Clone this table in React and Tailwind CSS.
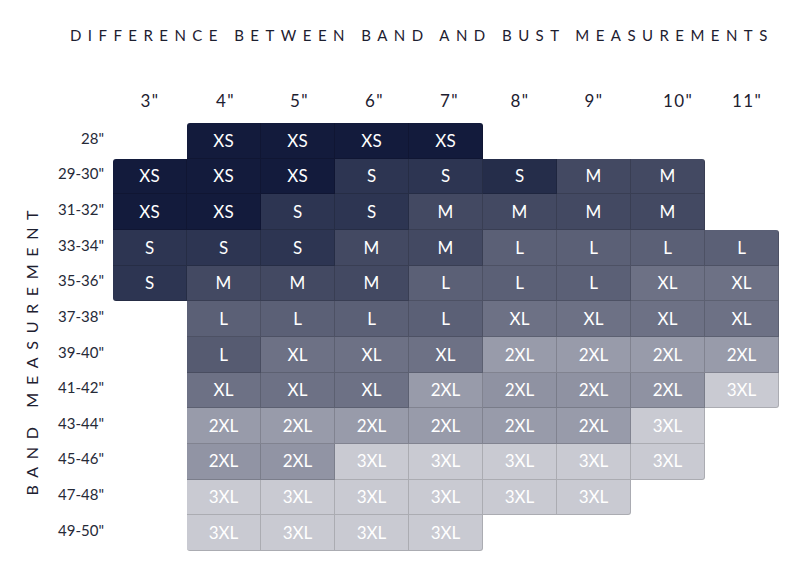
const COLS = [
  ['3"', ""],
  ['4"', "pl-[3px]"],
  ['5"', "pl-[3px]"],
  ['6"', "pl-[5px]"],
  ['7"', "pl-[7px]"],
  ['8"', ""],
  ['9"', ""],
  ['10"', "pl-[20px]"],
  ['11"', "pl-[10px]"],
];

const ROWS = [
  ['28"', [null, "XS", "XS", "XS", "XS", null, null, null, null]],
  ['29-30"', ["XS", "XS", "XS", "S", "S", "S", "M", "M", null]],
  ['31-32"', ["XS", "XS", "S", "S", "M", "M", "M", "M", null]],
  ['33-34"', ["S", "S", "S", "M", "M", "L", "L", "L", "L"]],
  ['35-36"', ["S", "M", "M", "M", "L", "L", "L", "XL", "XL"]],
  ['37-38"', [null, "L", "L", "L", "L", "XL", "XL", "XL", "XL"]],
  ['39-40"', [null, "L", "XL", "XL", "XL", "2XL", "2XL", "2XL", "2XL"]],
  ['41-42"', [null, "XL", "XL", "XL", "2XL", "2XL", "2XL", "2XL", "3XL"]],
  ['43-44"', [null, "2XL", "2XL", "2XL", "2XL", "2XL", "2XL", "3XL", null]],
  ['45-46"', [null, "2XL", "2XL", "3XL", "3XL", "3XL", "3XL", "3XL", null]],
  ['47-48"', [null, "3XL", "3XL", "3XL", "3XL", "3XL", "3XL", null, null]],
  ['49-50"', [null, "3XL", "3XL", "3XL", "3XL", null, null, null, null]],
];

const SHADE = {
  XS: "bg-[#131b3c]",
  S: "bg-[#2d3552]",
  M: "bg-[#434962]",
  L: "bg-[#5b6076]",
  XL: "bg-[#6d7185]",
  "2XL": "bg-[#989baa]",
  "3XL": "bg-[#c9cad2]",
};

// a few cells in the chart are a touch off their level's tone
const OVERRIDE = {
  "1-5": "bg-[#252d4a]",
  "6-1": "bg-[#565b71]",
  "7-5": "bg-[#8f92a2]",
  "7-6": "bg-[#8f92a2]",
  "7-7": "bg-[#8f92a2]",
  "9-1": "bg-[#9194a4]",
  "9-2": "bg-[#9194a4]",
};

function has(r, c) {
  return !!(ROWS[r] && ROWS[r][1][c]);
}

function corners(r, c) {
  const out = [];
  if (!has(r - 1, c) && !has(r, c - 1)) out.push("rounded-tl-[3px]");
  if (!has(r - 1, c) && !has(r, c + 1)) out.push("rounded-tr-[3px]");
  if (!has(r + 1, c) && !has(r, c - 1)) out.push("rounded-bl-[3px]");
  if (!has(r + 1, c) && !has(r, c + 1)) out.push("rounded-br-[3px]");
  return out.join(" ");
}

export default function App() {
  return (
    <div className="h-[561px] w-[800px] overflow-hidden bg-white font-['Lato','Liberation_Sans',sans-serif] text-[#1d2030]">
      <h1 className="pl-[70px] pt-[25px] text-[15px] leading-5 tracking-[0.43em] text-[#1d2030]">
        DIFFERENCE BETWEEN BAND AND BUST MEASUREMENTS
      </h1>

      <div className="mt-[35px] grid grid-cols-[64px_49px_repeat(9,74px)] grid-rows-[43px_repeat(12,35.67px)]">
        <div />
        <div />
        {COLS.map(([c, shift]) => (
          <div
            key={c}
            className={`flex items-center justify-center pb-[2px] text-[17px] tracking-[0.08em] ${shift}`}
          >
            {c}
          </div>
        ))}

        <div className="col-start-1 row-span-12 row-start-2 flex items-center justify-center pt-[32px]">
          <span className="-rotate-90 whitespace-nowrap pl-[0.48em] text-[16px] tracking-[0.48em]">
            BAND MEASUREMENT
          </span>
        </div>

        {ROWS.map(([label, cells], r) => (
          <div key={label} className="contents">
            <div
              className={`col-start-2 flex items-center justify-end whitespace-nowrap pb-[6px] pr-[9px] text-[15px] text-[#262a38] ${
                r === 0 ? "row-start-2" : ""
              }`}
            >
              {label}
            </div>
            {cells.map((s, c) =>
              s ? (
                <div
                  key={c}
                  className={`flex items-center justify-center border-b border-r border-black/15 text-[17px] text-white ${
                    OVERRIDE[`${r}-${c}`] || SHADE[s]
                  } ${corners(r, c)}`}
                >
                  {s}
                </div>
              ) : (
                <div key={c} />
              )
            )}
          </div>
        ))}
      </div>
    </div>
  );
}
